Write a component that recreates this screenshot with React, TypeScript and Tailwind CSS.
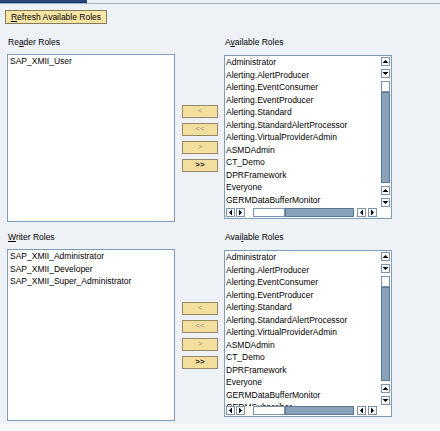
import type { ReactNode } from "react";

const AVAILABLE = [
  "Administrator",
  "Alerting.AlertProducer",
  "Alerting.EventConsumer",
  "Alerting.EventProducer",
  "Alerting.Standard",
  "Alerting.StandardAlertProcessor",
  "Alerting.VirtualProviderAdmin",
  "ASMDAdmin",
  "CT_Demo",
  "DPRFramework",
  "Everyone",
  "GERMDataBufferMonitor",
  "GERMSubscriber",
  "GERMUser",
];

function Arrow({ dir }: { dir: "up" | "down" | "left" | "right" }) {
  const points = {
    up: "0.5,4 3.5,1 6.5,4",
    down: "0.5,1 3.5,4 6.5,1",
    left: "4,0.5 1,3.5 4,6.5",
    right: "1,0.5 4,3.5 1,6.5",
  }[dir];
  const size = dir === "up" || dir === "down" ? "w-[7px] h-[5px]" : "w-[5px] h-[7px]";
  const box = dir === "up" || dir === "down" ? "0 0 7 5" : "0 0 5 7";
  return (
    <div className="flex h-[9px] w-[9px] shrink-0 items-center justify-center border border-[#7d93aa] bg-[#fbfcfd]">
      <svg viewBox={box} className={size}>
        <polygon points={points} fill="#000" />
      </svg>
    </div>
  );
}

function VScroll() {
  return (
    <div className="flex w-[12px] shrink-0 flex-col items-center py-[1px]">
      <Arrow dir="up" />
      <div className="mt-[3px]">
        <Arrow dir="down" />
      </div>
      <div className="mt-[3px] h-[11px] w-[9px] border border-[#7d93aa] bg-white" />
      <div className="w-[9px] flex-1 border border-[#5b7893] bg-[#8aa2b9]" />
      <div className="mt-[3px]">
        <Arrow dir="up" />
      </div>
      <div className="mt-[3px]">
        <Arrow dir="down" />
      </div>
    </div>
  );
}

function HScroll() {
  return (
    <div className="mb-[1px] flex h-[9px] shrink-0 items-center pl-[1px]">
      <Arrow dir="left" />
      <div className="ml-[1px]">
        <Arrow dir="right" />
      </div>
      <div className="ml-[8px] h-[9px] w-[32px] border border-[#7d93aa] bg-white" />
      <div className="h-[9px] w-[69px] border border-[#5b7893] bg-[#8aa2b9]" />
      <div className="ml-[3px]">
        <Arrow dir="left" />
      </div>
      <div className="ml-[2px]">
        <Arrow dir="right" />
      </div>
    </div>
  );
}

function AvailableList({ heightClass }: { heightClass: string }) {
  return (
    <div className={`flex w-[168px] flex-col border border-[#7f9db9] bg-white ${heightClass}`}>
      <div className="flex min-h-0 flex-1">
        <div className="min-w-0 flex-1 overflow-hidden pl-[1px]">
          {AVAILABLE.map((r) => (
            <div key={r} className="h-[12.5px] whitespace-nowrap leading-[12.5px]">
              {r}
            </div>
          ))}
        </div>
        <VScroll />
      </div>
      <HScroll />
    </div>
  );
}

function AssignedList({ items, heightClass }: { items: string[]; heightClass: string }) {
  return (
    <div className={`w-[168px] border border-[#7f9db9] bg-white pl-[2px] ${heightClass}`}>
      {items.map((r) => (
        <div key={r} className="h-[12.5px] whitespace-nowrap leading-[12.5px]">
          {r}
        </div>
      ))}
    </div>
  );
}

function MoveButton({ children, active }: { children: ReactNode; active?: boolean }) {
  return (
    <button
      type="button"
      className={`flex h-[13px] w-[36px] items-center justify-center border border-[#968a66] bg-[#f2df9e] text-[8px] leading-none ${
        active ? "font-bold text-[#222]" : "text-[#a39672]"
      }`}
    >
      {children}
    </button>
  );
}

function MoveButtons() {
  return (
    <div className="flex flex-col gap-[5px] pl-[7px]">
      <MoveButton>&lt;</MoveButton>
      <MoveButton>&lt;&lt;</MoveButton>
      <MoveButton>&gt;</MoveButton>
      <MoveButton active>&gt;&gt;</MoveButton>
    </div>
  );
}

function Section({
  label,
  items,
  leftH,
  rightH,
  availableLabel,
}: {
  label: ReactNode;
  items: string[];
  leftH: string;
  rightH: string;
  availableLabel: ReactNode;
}) {
  return (
    <div className="grid grid-cols-[168px_49px_168px] pl-[7px]">
      <div className="h-[12px] pl-[1px] leading-[12px]">{label}</div>
      <div />
      <div className="h-[12px] pl-[1px] leading-[12px]">{availableLabel}</div>
      <div className="mt-[6px]">
        <AssignedList items={items} heightClass={leftH} />
      </div>
      <div className="mt-[6px] flex items-center">
        <MoveButtons />
      </div>
      <div className="mt-[7px]">
        <AvailableList heightClass={rightH} />
      </div>
    </div>
  );
}

export default function App() {
  return (
    <div className="flex h-[431px] w-[440px] flex-col bg-[#eef1f6] font-['Liberation_Sans',Arial,sans-serif] text-[8.5px] text-black">
      <div className="flex h-[3px]">
        <div className="w-[87px] bg-gradient-to-b from-[#2d4c7e] to-[#163262]" />
      </div>
      <div className="h-px bg-[#9fb2c9]" />

      <div className="pl-[5px] pt-[6px]">
        <button
          type="button"
          className="flex h-[14px] w-[102px] items-center justify-center border border-[#857b5f] bg-[#f7e5a6] text-[8.5px] leading-none"
        >
          <span>
            <u>R</u>efresh Available Roles
          </span>
        </button>
      </div>

      <div className="mt-[12px]">
        <Section
          label={
            <>
              Re<u>a</u>der Roles
            </>
          }
          availableLabel={
            <>
              A<u>v</u>ailable Roles
            </>
          }
          items={["SAP_XMII_User"]}
          leftH="h-[168px]"
          rightH="h-[164px]"
        />
      </div>

      <div className="mt-[9px]">
        <Section
          label={
            <>
              <u>W</u>riter Roles
            </>
          }
          availableLabel={
            <>
              Avai<u>l</u>able Roles
            </>
          }
          items={[
            "SAP_XMII_Administrator",
            "SAP_XMII_Developer",
            "SAP_XMII_Super_Administrator",
          ]}
          leftH="h-[172px]"
          rightH="h-[167px]"
        />
      </div>

      <div className="mt-auto h-[7px] bg-[#f7f9fb]" />
    </div>
  );
}
